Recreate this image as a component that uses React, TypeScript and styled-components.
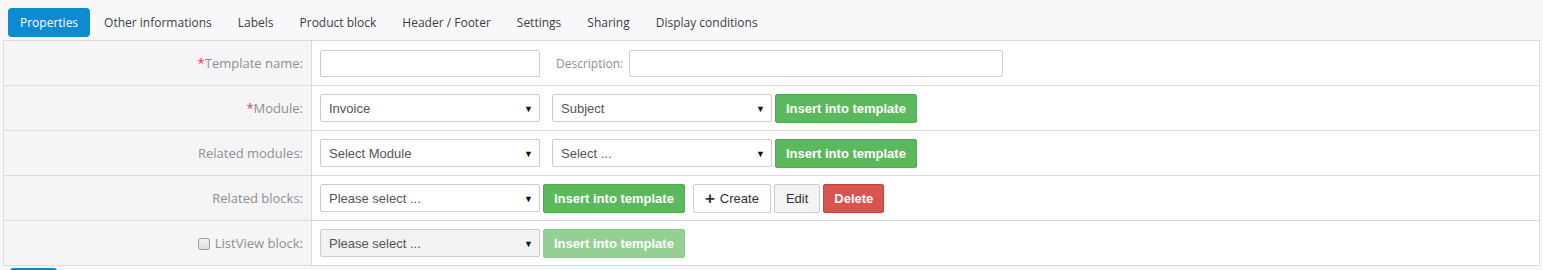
import styled, { createGlobalStyle } from 'styled-components';

const GlobalStyle = createGlobalStyle`
  body {
    margin: 0;
    background: #f8f8fa;
    font-family: 'Open Sans', 'Liberation Sans', sans-serif;
  }
`;

const Page = styled.div`
  width: 1543px;
  height: 270px;
  overflow: hidden;
`;

const Tabs = styled.ul`
  display: flex;
  gap: 2px;
  list-style: none;
  margin: 0;
  padding: 8px 0 3px 8px;
`;

const Tab = styled.li<{ $active?: boolean }>`
  height: 29px;
  box-sizing: border-box;
  padding: 0 12px;
  display: flex;
  align-items: center;
  font-size: 12px;
  border-radius: 4px;
  color: ${(p) => (p.$active ? '#fff' : '#3b3f44')};
  background: ${(p) => (p.$active ? '#0c8bd0' : 'transparent')};
`;

const Table = styled.table`
  margin-left: 3px;
  width: 1537px;
  border-collapse: collapse;
  border: 1px solid #dcdcdc;
`;

const Row = styled.tr`
  height: 45px;
  border-bottom: 1px solid #dcdcdc;
`;

const LabelCell = styled.td`
  width: 299px;
  padding: 0 8px 0 0;
  background: #f5f5f7;
  border-right: 1px solid #dcdcdc;
  text-align: right;
  font-size: 13px;
  color: #8f8f8f;
  white-space: nowrap;
`;

const Required = styled.span`
  color: #e0393e;
`;

const ValueCell = styled.td`
  background: #fff;
  padding: 0 0 0 8px;
`;

const Line = styled.div`
  display: flex;
  align-items: center;
  gap: 3px;
`;

const TextInput = styled.input<{ $width: number }>`
  width: ${(p) => p.$width}px;
  height: 27px;
  box-sizing: border-box;
  border: 1px solid #ccc;
  border-radius: 2px;
  background: #fff;
`;

const InlineLabel = styled.label`
  font-size: 12px;
  color: #8f8f8f;
  margin: 0 3px 0 13px;
`;

const SelectWrap = styled.div<{ $gap?: number }>`
  position: relative;
  margin-right: ${(p) => p.$gap ?? 0}px;
  &::after {
    content: '▼';
    position: absolute;
    right: 7px;
    top: 8px;
    font-size: 9px;
    color: #111;
    pointer-events: none;
  }
`;

const Select = styled.select`
  appearance: none;
  width: 220px;
  height: 28px;
  box-sizing: border-box;
  border: 1px solid #ccc;
  border-radius: 2px;
  padding: 0 8px;
  font-family: 'Liberation Sans', Arial, sans-serif;
  font-size: 13px;
  color: #555;
  background: #fff;
  &:disabled {
    background: #f2f2f2;
    opacity: 1;
  }
`;

const Button = styled.button<{ $kind: 'success' | 'default' | 'light' | 'danger'; $dim?: boolean }>`
  height: 29px;
  box-sizing: border-box;
  padding: 0 ${(p) => (p.$kind === 'success' || p.$kind === 'danger' ? 10 : 11)}px;
  border-radius: 2px;
  font-family: 'Liberation Sans', Arial, sans-serif;
  font-size: 13px;
  display: flex;
  align-items: center;
  gap: 5px;
  font-weight: ${(p) => (p.$kind === 'success' || p.$kind === 'danger' ? 700 : 400)};
  color: ${(p) => (p.$kind === 'success' || p.$kind === 'danger' ? '#fff' : '#333')};
  background: ${(p) =>
    p.$kind === 'success' ? '#5cb85c' : p.$kind === 'danger' ? '#d9534f' : p.$kind === 'light' ? '#f4f4f4' : '#fff'};
  border: 1px solid
    ${(p) => (p.$kind === 'success' ? '#4cae4c' : p.$kind === 'danger' ? '#c9403c' : '#ccc')};
  opacity: ${(p) => (p.$dim ? 0.65 : 1)};
`;

const Plus = styled.span`
  font-size: 17px;
  font-weight: 700;
  line-height: 1;
`;

const Spacer = styled.span<{ $w: number }>`
  width: ${(p) => p.$w}px;
`;

const Check = styled.span`
  display: inline-block;
  width: 10px;
  height: 10px;
  border: 1px solid #9a9a9a;
  border-radius: 3px;
  background: linear-gradient(#f4f4f4, #dcdcdc);
  margin-right: 5px;
  vertical-align: -2px;
`;

const SaveBar = styled.div`
  padding: 2px 0 0 10px;
`;

const SaveButton = styled.div`
  width: 47px;
  height: 20px;
  border-radius: 3px;
  background: #0c8bd0;
`;

const tabs = [
  'Properties',
  'Other informations',
  'Labels',
  'Product block',
  'Header / Footer',
  'Settings',
  'Sharing',
  'Display conditions',
];

const Insert = ({ dim }: { dim?: boolean }) => (
  <Button $kind="success" $dim={dim}>
    Insert into template
  </Button>
);

const App = () => {
  return (
    <Page>
      <GlobalStyle />
      <Tabs>
        {tabs.map((t, i) => (
          <Tab key={t} $active={i === 0}>
            {t}
          </Tab>
        ))}
      </Tabs>
      <Table>
        <tbody>
          <Row>
            <LabelCell>
              <Required>*</Required>Template name:
            </LabelCell>
            <ValueCell>
              <Line>
                <TextInput $width={220} />
                <InlineLabel>Description:</InlineLabel>
                <TextInput $width={374} />
              </Line>
            </ValueCell>
          </Row>
          <Row>
            <LabelCell>
              <Required>*</Required>Module:
            </LabelCell>
            <ValueCell>
              <Line>
                <SelectWrap $gap={9}>
                  <Select>
                    <option>Invoice</option>
                  </Select>
                </SelectWrap>
                <SelectWrap>
                  <Select>
                    <option>Subject</option>
                  </Select>
                </SelectWrap>
                <Insert />
              </Line>
            </ValueCell>
          </Row>
          <Row>
            <LabelCell>Related modules:</LabelCell>
            <ValueCell>
              <Line>
                <SelectWrap $gap={9}>
                  <Select>
                    <option>Select Module</option>
                  </Select>
                </SelectWrap>
                <SelectWrap>
                  <Select>
                    <option>Select ...</option>
                  </Select>
                </SelectWrap>
                <Insert />
              </Line>
            </ValueCell>
          </Row>
          <Row>
            <LabelCell>Related blocks:</LabelCell>
            <ValueCell>
              <Line>
                <SelectWrap>
                  <Select>
                    <option>Please select ...</option>
                  </Select>
                </SelectWrap>
                <Insert />
                <Spacer $w={2} />
                <Button $kind="default">
                  <Plus>+</Plus>Create
                </Button>
                <Button $kind="light">Edit</Button>
                <Button $kind="danger">Delete</Button>
              </Line>
            </ValueCell>
          </Row>
          <Row>
            <LabelCell>
              <Check />
              ListView block:
            </LabelCell>
            <ValueCell>
              <Line>
                <SelectWrap>
                  <Select disabled>
                    <option>Please select ...</option>
                  </Select>
                </SelectWrap>
                <Insert dim />
              </Line>
            </ValueCell>
          </Row>
        </tbody>
      </Table>
      <SaveBar>
        <SaveButton />
      </SaveBar>
    </Page>
  );
};

export default App;
